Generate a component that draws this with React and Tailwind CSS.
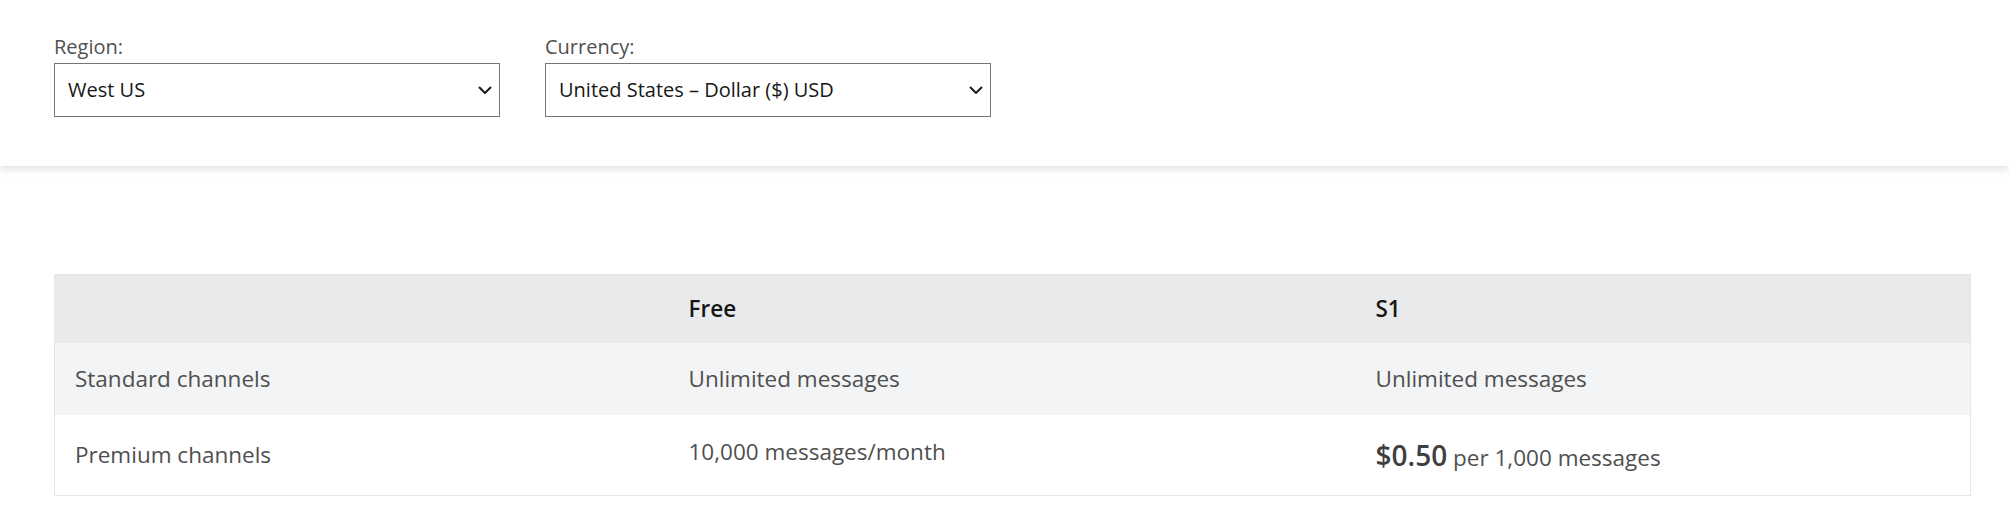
import React from "react";

function Chevron() {
  return (
    <svg width="14" height="8" viewBox="0 0 14 8" fill="none" className="shrink-0">
      <path d="M1 1l6 6 6-6" stroke="#1b1b1b" strokeWidth="2" />
    </svg>
  );
}

function Picker({ label, value }) {
  return (
    <div className="flex flex-col w-[446px]">
      <label className="text-[20px] leading-[26px] text-[#505050]">{label}</label>
      <div className="mt-[3px] h-[54px] border border-[#767676] bg-white flex items-center justify-between pl-[13px] pr-[7px]">
        <span className="text-[20px] text-[#171717]">{value}</span>
        <Chevron />
      </div>
    </div>
  );
}

const rows = [
  { name: "Standard channels", free: "Unlimited messages", s1: "Unlimited messages", bg: "bg-[#f3f4f6]" },
  { name: "Premium channels", free: "10,000 messages/month", s1: null, bg: "bg-white" },
];

export default function App() {
  return (
    <div className="bg-white min-h-screen font-['Open_Sans',sans-serif]">
      <div className="h-[166px] pt-[34px] px-[54px] bg-white shadow-[0_3px_8px_rgba(0,0,0,0.12)] relative">
        <div className="flex gap-[45px]">
          <Picker label="Region:" value="West US" />
          <Picker label="Currency:" value="United States – Dollar ($) USD" />
        </div>
      </div>

      <div className="pt-[108px] pl-[54px] pr-[38px]">
        <table className="w-full border-collapse border border-[#e6e6e6] text-[22.5px]">
          <thead>
            <tr className="bg-[#e9eaec] h-[68px]">
              <th className="w-[614px]"></th>
              <th className="w-[687px] text-left font-semibold pl-[20px] text-[#171717]">Free</th>
              <th className="text-left font-semibold pl-[20px] text-[#171717]">S1</th>
            </tr>
          </thead>
          <tbody className="text-[#4f4f4f]">
            <tr className={`${rows[0].bg} h-[72px]`}>
              <td className="pl-[20px]">{rows[0].name}</td>
              <td className="pl-[20px]">{rows[0].free}</td>
              <td className="pl-[20px]">{rows[0].s1}</td>
            </tr>
            <tr className={`${rows[1].bg} h-[81px]`}>
              <td className="pl-[20px]">{rows[1].name}</td>
              <td className="pl-[20px] pb-[6px]">{rows[1].free}</td>
              <td className="pl-[20px]">
                <span className="text-[28px] font-semibold text-[#3f3f3f]">$0.50</span> per 1,000 messages
              </td>
            </tr>
          </tbody>
        </table>
      </div>
    </div>
  );
}
